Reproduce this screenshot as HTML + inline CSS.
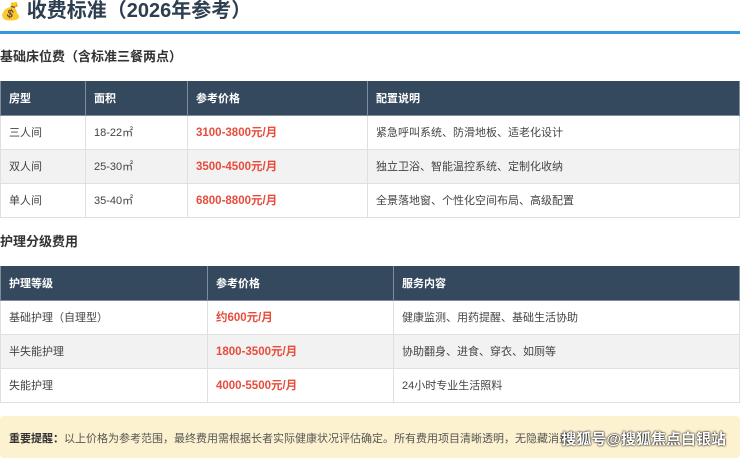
<!DOCTYPE html>
<html><head><meta charset="utf-8"><style>
*{margin:0;padding:0;box-sizing:border-box}
body{width:740px;height:455px;overflow:hidden;background:#fff;font-family:"Liberation Sans","Noto Sans CJK SC",sans-serif;color:#333;position:relative}
.title{position:absolute;left:0;top:-3px;font-size:20px;font-weight:bold;color:#2c3e50;line-height:28px;white-space:nowrap}
.line{position:absolute;left:0;top:31px;width:740px;height:3px;background:#3498db}
.h3{position:absolute;left:0;font-size:13px;font-weight:bold;color:#333;line-height:18px}
table{position:absolute;left:0;width:740px;border-collapse:collapse;font-size:11px;table-layout:fixed}
th{background:#34495e;color:#fff;font-weight:bold;text-align:left;height:34px;padding-left:8px;border:1px solid #7f8c9a;border-top:none}
td{height:34px;padding-left:8px;border:1px solid #e0e0e0;color:#444}
tr.g td{background:#f2f2f2}
.r{color:#e74c3c;font-weight:bold;font-size:11.5px}
.note{position:absolute;left:0;top:416px;width:740px;height:42px;background:#fdf2cf;border-radius:4px;font-size:11px;color:#555;padding:14px 0 0 9px;white-space:nowrap}
.wm{position:absolute;right:14px;top:428px;font-size:15px;font-weight:bold;color:#fff;text-shadow:0 0 2px #000,0 0 1px #000}
</style></head><body>
<div class="title"><span style="font-size:17px">💰</span> 收费标准（2026年参考）</div>
<div class="line"></div>
<div class="h3" style="top:48px">基础床位费（含标准三餐两点）</div>
<table style="top:81px">
<colgroup><col style="width:85px"><col style="width:102px"><col style="width:180px"><col></colgroup>
<tr><th>房型</th><th>面积</th><th>参考价格</th><th>配置说明</th></tr>
<tr><td>三人间</td><td>18-22㎡</td><td class="r">3100-3800元/月</td><td>紧急呼叫系统、防滑地板、适老化设计</td></tr>
<tr class="g"><td>双人间</td><td>25-30㎡</td><td class="r">3500-4500元/月</td><td>独立卫浴、智能温控系统、定制化收纳</td></tr>
<tr><td>单人间</td><td>35-40㎡</td><td class="r">6800-8800元/月</td><td>全景落地窗、个性化空间布局、高级配置</td></tr>
</table>
<div class="h3" style="top:233px">护理分级费用</div>
<table style="top:266px">
<colgroup><col style="width:207px"><col style="width:186px"><col></colgroup>
<tr><th>护理等级</th><th>参考价格</th><th>服务内容</th></tr>
<tr><td>基础护理（自理型）</td><td class="r">约600元/月</td><td>健康监测、用药提醒、基础生活协助</td></tr>
<tr class="g"><td>半失能护理</td><td class="r">1800-3500元/月</td><td>协助翻身、进食、穿衣、如厕等</td></tr>
<tr><td>失能护理</td><td class="r">4000-5500元/月</td><td>24小时专业生活照料</td></tr>
</table>
<div class="note"><b style="color:#333">重要提醒：</b>以上价格为参考范围，最终费用需根据长者实际健康状况评估确定。所有费用项目清晰透明，无隐藏消费。</div>
<div class="wm">搜狐号@搜狐焦点白银站</div>
</body></html>
